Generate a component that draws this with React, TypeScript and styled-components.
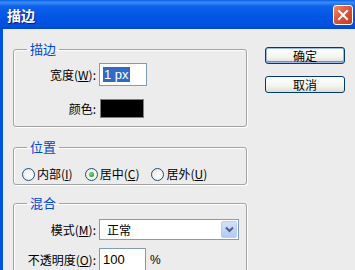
import { FC } from "react";
import styled, { createGlobalStyle } from "styled-components";

const GlobalStyle = createGlobalStyle`
  html, body {
    margin: 0;
    padding: 0;
    background: #ececec;
  }
  body {
    font-family: "Noto Sans CJK SC", "Liberation Sans", sans-serif;
    font-size: 12px;
    color: #000;
  }
`;

const Window = styled.div`
  width: 355px;
  height: 270px;
  overflow: hidden;
  display: flex;
  flex-direction: column;
  background: #0054e3;
`;

const TitleBar = styled.div`
  height: 29px;
  flex: 0 0 29px;
  display: flex;
  align-items: center;
  justify-content: space-between;
  padding: 0 2px 0 7px;
  box-sizing: border-box;
  background: linear-gradient(
    to bottom,
    #0a5ee8 0%,
    #3b8cf5 8%,
    #0e61ea 22%,
    #0055e5 60%,
    #0050dd 90%,
    #0046c8 100%
  );
`;

const Title = styled.span`
  color: #fff;
  font-size: 14px;
  font-weight: bold;
  text-shadow: 1px 1px 0 #0a1e80;
`;

const CloseBtn = styled.div`
  width: 20px;
  height: 20px;
  box-sizing: border-box;
  border: 1px solid #fff;
  border-radius: 3px;
  background: linear-gradient(135deg, #f08b6a 0%, #e0553a 45%, #c23c1f 100%);
  display: flex;
  align-items: center;
  justify-content: center;
`;

const Frame = styled.div`
  flex: 1;
  display: flex;
  padding-left: 3px;
`;

const Client = styled.div`
  flex: 1;
  display: flex;
  gap: 18px;
  background: #ececec;
  padding: 13px 0 0 10px;
`;

const LeftCol = styled.div`
  width: 234px;
  display: flex;
  flex-direction: column;
`;

const Group = styled.fieldset<{ $mt?: number }>`
  margin: ${(p) => p.$mt ?? 0}px 0 0 0;
  padding: 0;
  min-inline-size: 0;
  border: 1px solid #a3a3a3;
  border-radius: 3px;
  box-shadow: 1px 1px 0 #fff, inset 1px 1px 0 #fff;
`;

const Legend = styled.legend`
  margin-left: 13px;
  padding: 0 3px;
  font-size: 13px;
  line-height: 14px;
  color: #0046d5;
`;

const FormGrid = styled.div<{ $pt: number; $pb: number; $gap: number }>`
  display: grid;
  grid-template-columns: 82px 1fr;
  column-gap: 3px;
  row-gap: ${(p) => p.$gap}px;
  align-items: center;
  padding: ${(p) => p.$pt}px 0 ${(p) => p.$pb}px 0;
`;

const Label = styled.label`
  text-align: right;
  white-space: nowrap;
  line-height: 14px;
`;

const Field = styled.div`
  display: flex;
  align-items: center;
  gap: 4px;
`;

const TextBox = styled.div<{ $w: number }>`
  width: ${(p) => p.$w}px;
  height: 23px;
  box-sizing: border-box;
  border: 1px solid #7f9db9;
  background: #fff;
  display: flex;
  align-items: center;
  padding-left: 3px;
  font-family: "Liberation Sans", "Noto Sans CJK SC", sans-serif;
  font-size: 13px;
`;

const Selected = styled.span`
  background: #316ac5;
  color: #fff;
  padding: 0 1px;
  line-height: 15px;
`;

const Swatch = styled.div`
  width: 44px;
  height: 19px;
  margin-left: 1px;
  box-sizing: border-box;
  border: 1px solid #808080;
  background: #000;
`;

const Select = styled.div`
  width: 140px;
  height: 21px;
  box-sizing: border-box;
  border: 1px solid #7f9db9;
  background: #fff;
  display: flex;
  align-items: center;
  justify-content: space-between;
  padding: 0 1px 0 7px;
  font-size: 12px;
`;

const DropBtn = styled.div`
  width: 16px;
  height: 17px;
  box-sizing: border-box;
  border: 1px solid #b9cdf5;
  border-radius: 2px;
  background: linear-gradient(to bottom, #d2e0fd, #b4c9f7);
  display: flex;
  align-items: center;
  justify-content: center;
`;

const RadioRow = styled.div`
  display: flex;
  align-items: center;
  gap: 12px;
  padding: 13px 0 3px 8px;
  line-height: 14px;
`;

const RadioItem = styled.div`
  display: flex;
  align-items: center;
  gap: 2px;
  white-space: nowrap;
`;

const RadioCircle = styled.span<{ $checked?: boolean }>`
  width: 13px;
  height: 13px;
  box-sizing: border-box;
  border-radius: 50%;
  border: 1px solid #1c5180;
  background: radial-gradient(circle at 60% 60%, #fff 0%, #f0f0ea 60%, #dcdcd3 100%);
  display: flex;
  align-items: center;
  justify-content: center;
  &::after {
    content: "";
    display: ${(p) => (p.$checked ? "block" : "none")};
    width: 5px;
    height: 5px;
    border-radius: 50%;
    background: radial-gradient(circle at 40% 40%, #8ae08a, #21a121 70%);
  }
`;

const RightCol = styled.div`
  display: flex;
  flex-direction: column;
  gap: 12px;
  padding-top: 5px;
`;

const Button = styled.button<{ $default?: boolean }>`
  width: 80px;
  height: 17px;
  padding: 0;
  box-sizing: border-box;
  border: 1px solid #003c74;
  border-radius: 3px;
  background: linear-gradient(to bottom, #ffffff 0%, #f4f4f0 60%, #dcdcd3 100%);
  box-shadow: ${(p) =>
    p.$default ? "inset 0 0 0 1px #9cb7ea, inset 0 -1px 0 1px #6b8fd8" : "none"};
  font-family: "Noto Sans CJK SC", sans-serif;
  font-size: 12px;
  line-height: 14px;
  color: #000;
`;

const Percent = styled.span`
  font-family: "Liberation Sans", sans-serif;
  font-size: 12px;
`;

const App: FC = () => {
  return (
    <>
      <GlobalStyle />
      <Window>
        <TitleBar>
          <Title>描边</Title>
          <CloseBtn>
            <svg width="12" height="12" viewBox="0 0 12 12">
              <path
                d="M2 2 L10 10 M10 2 L2 10"
                stroke="#fff"
                strokeWidth="2"
                strokeLinecap="square"
              />
            </svg>
          </CloseBtn>
        </TitleBar>
        <Frame>
          <Client>
            <LeftCol>
              <Group>
                <Legend>描边</Legend>
                <FormGrid $pt={7} $pb={8} $gap={13}>
                  <Label>
                    宽度(<u>W</u>):
                  </Label>
                  <Field>
                    <TextBox $w={48}>
                      <Selected>1 px</Selected>
                    </TextBox>
                  </Field>
                  <Label>颜色:</Label>
                  <Field>
                    <Swatch />
                  </Field>
                </FormGrid>
              </Group>

              <Group $mt={13}>
                <Legend>位置</Legend>
                <RadioRow>
                  <RadioItem>
                    <RadioCircle />
                    <span>
                      内部(<u>I</u>)
                    </span>
                  </RadioItem>
                  <RadioItem>
                    <RadioCircle $checked />
                    <span>
                      居中(<u>C</u>)
                    </span>
                  </RadioItem>
                  <RadioItem>
                    <RadioCircle />
                    <span>
                      居外(<u>U</u>)
                    </span>
                  </RadioItem>
                </RadioRow>
              </Group>

              <Group $mt={11}>
                <Legend>混合</Legend>
                <FormGrid $pt={9} $pb={8} $gap={8}>
                  <Label>
                    模式(<u>M</u>):
                  </Label>
                  <Field>
                    <Select>
                      正常
                      <DropBtn>
                        <svg width="9" height="7" viewBox="0 0 9 7">
                          <path
                            d="M1 1.5 L4.5 5 L8 1.5"
                            fill="none"
                            stroke="#4d6185"
                            strokeWidth="2"
                          />
                        </svg>
                      </DropBtn>
                    </Select>
                  </Field>
                  <Label>
                    不透明度(<u>O</u>):
                  </Label>
                  <Field>
                    <TextBox $w={47}>100</TextBox>
                    <Percent>%</Percent>
                  </Field>
                </FormGrid>
              </Group>
            </LeftCol>
            <RightCol>
              <Button $default>确定</Button>
              <Button>取消</Button>
            </RightCol>
          </Client>
        </Frame>
      </Window>
    </>
  );
};

export default App;
